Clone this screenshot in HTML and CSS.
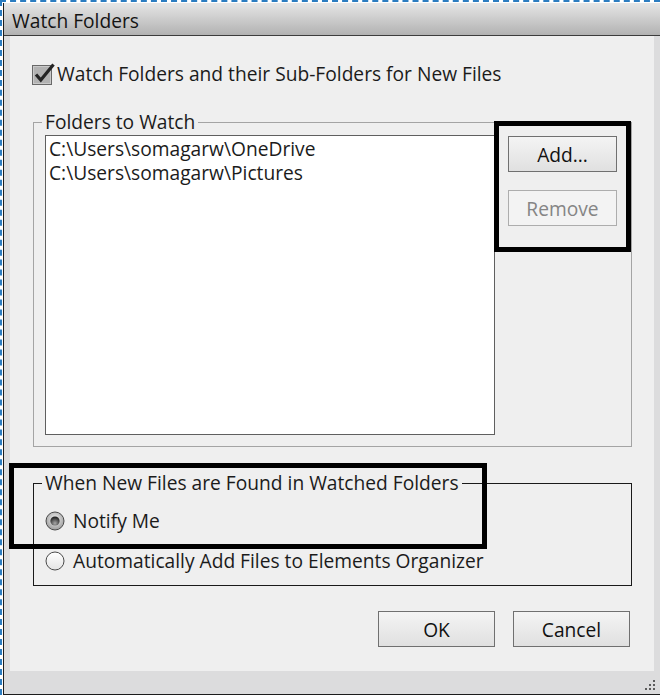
FILE: index.html
```html
<!DOCTYPE html>
<html lang="en">
<head>
    <meta charset="UTF-8">
    <meta name="viewport" content="width=device-width, initial-scale=1.0">
    <title>Watch Folders</title>
    <link rel="stylesheet" href="styles.css">
</head>

<body>

    <div class="frame">
        <div class="window">
            <div class="titlebar">Watch Folders</div>

            <div class="client">
                <div class="panel">

                    <label class="check-row">
                        <svg class="checkbox" viewBox="0 0 24 22" width="24" height="22">
                            <rect x="0.5" y="2.5" width="19" height="19" fill="#b2b2b2" stroke="#686868"/>
                            <rect x="1.5" y="3.5" width="17" height="17" fill="none" stroke="#c9c9c9"/>
                            <path d="M4 11.5 L8.8 17 L21.5 1.5" fill="none" stroke="#242424" stroke-width="3.2" stroke-linejoin="miter"/>
                        </svg>
                        Watch Folders and their Sub-Folders for New Files
                    </label>

                    <fieldset class="group group-folders">
                        <legend>Folders to Watch</legend>
                        <div class="folders-body">
                            <ul class="folder-list">
                                <li>C:\Users\somagarw\OneDrive</li>
                                <li>C:\Users\somagarw\Pictures</li>
                            </ul>
                            <div class="side-buttons">
                                <button class="btn" type="button">Add...</button>
                                <button class="btn" type="button" disabled>Remove</button>
                            </div>
                        </div>
                    </fieldset>

                    <fieldset class="group group-found">
                        <legend>When New Files are Found in Watched Folders</legend>
                        <div class="radio-row">
                            <svg class="radio" viewBox="0 0 20 20" width="20" height="20">
                                <defs>
                                    <radialGradient id="ringFill" cx="50%" cy="40%" r="60%">
                                        <stop offset="0" stop-color="#f4f4f4"/>
                                        <stop offset="1" stop-color="#9c9c9c"/>
                                    </radialGradient>
                                    <radialGradient id="dotFill" cx="50%" cy="75%" r="70%">
                                        <stop offset="0" stop-color="#a8a8a8"/>
                                        <stop offset="1" stop-color="#1c1c1c"/>
                                    </radialGradient>
                                </defs>
                                <circle cx="10" cy="10" r="9" fill="url(#ringFill)" stroke="#4a4a4a"/>
                                <circle cx="10" cy="10" r="4.6" fill="url(#dotFill)"/>
                            </svg>
                            <span>Notify Me</span>
                        </div>
                        <div class="radio-row">
                            <svg class="radio" viewBox="0 0 20 20" width="20" height="20">
                                <defs>
                                    <linearGradient id="offFill" x1="0" y1="0" x2="0" y2="1">
                                        <stop offset="0" stop-color="#ffffff"/>
                                        <stop offset="1" stop-color="#e4e4e4"/>
                                    </linearGradient>
                                </defs>
                                <circle cx="10" cy="10" r="9" fill="url(#offFill)" stroke="#4a4a4a"/>
                            </svg>
                            <span>Automatically Add Files to Elements Organizer</span>
                        </div>
                    </fieldset>

                    <div class="dialog-buttons">
                        <button class="btn btn-wide" type="button">OK</button>
                        <button class="btn btn-wide" type="button">Cancel</button>
                    </div>

                    <!-- highlight boxes drawn over the dialog -->
                    <div class="mark mark-buttons"></div>
                    <div class="mark mark-notify"></div>
                </div>

                <div class="statusbar">
                    <svg class="grip" viewBox="0 0 12 12" width="12" height="12">
                        <rect x="9" y="1" width="2" height="2" fill="#5c5c5c"/>
                        <rect x="5" y="5" width="2" height="2" fill="#5c5c5c"/>
                        <rect x="9" y="5" width="2" height="2" fill="#5c5c5c"/>
                        <rect x="1" y="9" width="2" height="2" fill="#5c5c5c"/>
                        <rect x="5" y="9" width="2" height="2" fill="#5c5c5c"/>
                        <rect x="9" y="9" width="2" height="2" fill="#5c5c5c"/>
                    </svg>
                </div>
            </div>
        </div>
    </div>

</body>
</html>
```

FILE: styles.css
```css
* {
    box-sizing: border-box;
}

html,
body {
    margin: 0;
}

body {
    background: #ffffff;
    font-family: "Open Sans", "Segoe UI", sans-serif;
    font-size: 19.2px;
    color: #1b1b1b;
}

.frame {
    width: 660px;
    height: 695px;
    border-top: 2px dashed #2b7cc0;
    border-left: 2px dashed #2b7cc0;
    padding: 1px 0 0 1px;
}

.window {
    height: 100%;
    display: flex;
    flex-direction: column;
    border-left: 1px solid #1c1c1c;
    border-bottom: 1px solid #1c1c1c;
    background: #dcdcdd;
}

.titlebar {
    height: 33px;
    padding: 4px 0 0 8px;
    line-height: 28px;
    color: #141414;
    background: linear-gradient(#e6e6e6, #b2b2b2);
    border-bottom: 1px solid #3c3c3c;
}

.client {
    flex: 1;
    display: flex;
    flex-direction: column;
    padding: 0 6px 0 6px;
}

.panel {
    position: relative;
    height: 635px;
    display: flex;
    flex-direction: column;
    padding: 26px 22px 0 23px;
    background: #efefef;
}

.check-row {
    display: flex;
    align-items: center;
    height: 24px;
    line-height: 24px;
}

.checkbox {
    margin: 0 1px 0 -1px;
}

.group {
    margin: 0;
    min-width: 0;
    border: 1px solid #a4a4a4;
}

.group legend {
    margin-left: -3px;
    padding: 0 3px;
    line-height: 22px;
}

.group-folders {
    margin-top: 25px;
    padding: 2px 14px 11px 11px;
}

.folders-body {
    display: flex;
    gap: 13px;
}

.folder-list {
    width: 450px;
    height: 300px;
    margin: 0;
    padding: 1px 3px;
    list-style: none;
    line-height: 24px;
    background: #ffffff;
    border: 1px solid #5f5f5f;
}

.side-buttons {
    display: flex;
    flex-direction: column;
    gap: 18px;
    padding-top: 1px;
}

.btn {
    width: 109px;
    height: 36px;
    padding: 0;
    font: inherit;
    color: #111111;
    background: linear-gradient(#f4f4f4, #e0e0e0);
    border: 1px solid #707070;
    border-radius: 0;
}

.btn:disabled {
    color: #858585;
    background: #f3f3f3;
    border-color: #adadad;
}

.btn-wide {
    width: 117px;
}

.group-found {
    margin-top: 25px;
    padding: 15px 11px 12px 11px;
    border-color: #1a1a1a;
}

.radio-row {
    display: flex;
    align-items: center;
    gap: 8px;
    height: 24px;
    line-height: 24px;
}

.radio-row + .radio-row {
    margin-top: 16px;
}

.dialog-buttons {
    display: flex;
    justify-content: flex-end;
    gap: 18px;
    margin-top: 25px;
    padding-right: 2px;
}

.mark {
    position: absolute;
    border: 5px solid #000000;
}

.mark-buttons {
    left: 484px;
    top: 85px;
    width: 137px;
    height: 131px;
}

.mark-notify {
    left: -1px;
    top: 427px;
    width: 478px;
    height: 86px;
}

.statusbar {
    flex: 1;
    display: flex;
    justify-content: flex-end;
    align-items: flex-end;
    margin-right: -6px;
    padding: 0 4px 3px 0;
}
```
